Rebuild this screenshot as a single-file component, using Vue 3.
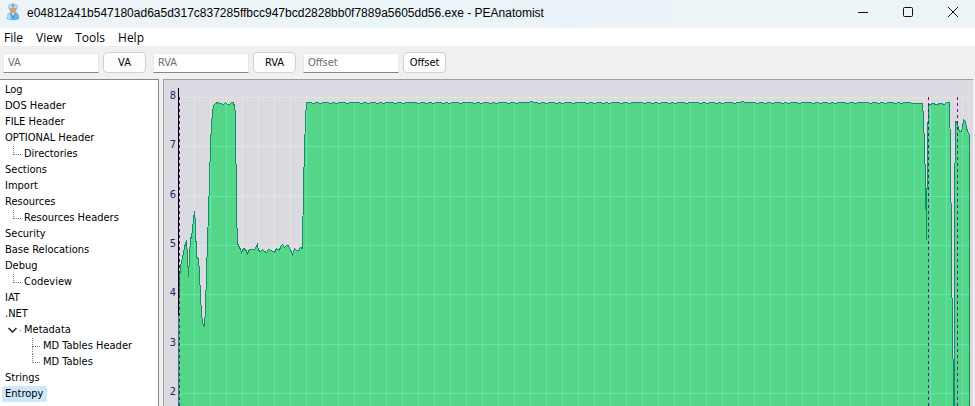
<script setup>
import { computed, ref } from 'vue'

const title = 'e04812a41b547180ad6a5d317c837285ffbcc947bcd2828bb0f7889a5605dd56.exe - PEAnatomist'
const menus = ['File', 'View', 'Tools', 'Help']
const fields = ['VA', 'RVA', 'Offset']
const selected = ref('Entropy')
const tree = [
  { name: 'Log', level: 0 },
  { name: 'DOS Header', level: 0 },
  { name: 'FILE Header', level: 0 },
  { name: 'OPTIONAL Header', level: 0 },
  { name: 'Directories', level: 1 },
  { name: 'Sections', level: 0 },
  { name: 'Import', level: 0 },
  { name: 'Resources', level: 0 },
  { name: 'Resources Headers', level: 1 },
  { name: 'Security', level: 0 },
  { name: 'Base Relocations', level: 0 },
  { name: 'Debug', level: 0 },
  { name: 'Codeview', level: 1 },
  { name: 'IAT', level: 0 },
  { name: '.NET', level: 0 },
  { name: 'Metadata', level: 1, open: true },
  { name: 'MD Tables Header', level: 2, more: true },
  { name: 'MD Tables', level: 2 },
  { name: 'Strings', level: 0 },
  { name: 'Entropy', level: 0 }
]

const columns = Array.from({ length: 49 }, (_, i) => 194 + i * 16)
const rows = [
  { value: 8, y: 97 },
  { value: 7, y: 146 },
  { value: 6, y: 196 },
  { value: 5, y: 245 },
  { value: 4, y: 294 },
  { value: 3, y: 344 },
  { value: 2, y: 393 }
]
const sections = [179, 928, 957]

const head = [
  [178, 420], [178, 315], [179, 280], [180, 265], [181, 262], [182, 257], [183, 252], [184, 247], [185, 243],
  [186, 241], [187, 256], [188, 276], [189, 256], [190, 238], [191, 236], [192, 230], [193, 218], [194, 211],
  [195, 224], [196, 257], [198, 258], [199, 272], [200, 297], [201, 312], [202, 322], [203, 325], [204, 326],
  [205, 307], [206, 273], [207, 240], [208, 213], [209, 180], [210, 144], [211, 124], [212, 112], [213, 105],
  [215, 103], [217, 102], [220, 103], [223, 104], [225, 102], [227, 104], [229, 104], [231, 102], [233, 102],
  [234, 106], [235, 113], [236, 211], [237, 243], [238, 245], [240, 249], [241, 252], [243, 248], [245, 249],
  [247, 253], [249, 249], [254, 249], [256, 246], [257, 244], [258, 250], [260, 251], [262, 249], [264, 251],
  [266, 252], [268, 249], [271, 250], [274, 252], [276, 248], [279, 250], [280, 246], [282, 244], [284, 247],
  [286, 245], [288, 245], [290, 250], [292, 254], [294, 248], [296, 250], [298, 250], [300, 247], [302, 248],
  [303, 185], [304, 149], [305, 118], [306, 102]
]
const tail = [
  [922, 103], [923, 118], [924, 146], [925, 180], [926, 239], [927, 139], [928, 105], [930, 104], [932, 103],
  [936, 104], [940, 103], [944, 104], [946, 102], [949, 102], [950, 152], [951, 251], [952, 341], [953, 376],
  [953, 420], [954, 420], [954, 206], [955, 121], [957, 122], [958, 128], [959, 131], [961, 131], [962, 126],
  [963, 119], [965, 121], [966, 127], [967, 131], [969, 134], [969, 420]
]
const dips = [5, 4, 7, 3, 8, 11, 4, 6, 3, 9, 5, 12]
const curve = computed(() => {
  const flat = []
  let x = 307
  for (let i = 0; x < 912; i++) {
    const y = i % 2 ? (i % 23 === 1 && i > 1 ? 101 : 103) : 102
    const width = i % 2 ? 3 : dips[(i / 2) % dips.length]
    flat.push([x, y], [x + width - 1, y])
    x += width
  }
  return [...head, ...flat, ...tail].map(([px, py]) => `${px + 0.5},${py + 0.5}`).join(' ')
})
</script>

<template>
  <div class="window">
    <header class="titlebar">
      <svg class="logo" viewBox="0 0 16 18" aria-hidden="true">
        <path d="M2 16 Q1 10 6 9 H10 Q15 10 14 16 Q8 18.500 2 16Z" fill="#65b6e8" />
        <path d="M2 14 Q2 11 5 10 L6 16 H3Z" fill="#a9dcf7" />
        <path d="M5 9 L8 13 L11 9Z" fill="#f4fbff" />
        <ellipse cx="8" cy="6.500" rx="3.500" ry="4" fill="#dfa06c" />
        <path d="M4 6 Q3 4 4 2 Q8 -1 12 2 Q13 4 12 6 Q8 3.500 4 6Z" fill="#b4dcf3" stroke="#78b4da" stroke-width=".6" />
        <path d="M8 1.300 V3.700 M6.800 2.500 H9.200" stroke="#db5963" stroke-width="1" />
        <path d="M6 10 L8 15 L10 10" fill="none" stroke="#3487c2" stroke-width=".8" />
      </svg>
      <h1>{{ title }}</h1>
      <div class="controls">
        <button type="button" aria-label="Minimize">
          <svg viewBox="0 0 12 12"><path d="M1 6.500H11" /></svg>
        </button>
        <button type="button" aria-label="Maximize">
          <svg viewBox="0 0 12 12"><rect x="1.500" y="1.500" width="9" height="9" rx="1" /></svg>
        </button>
        <button type="button" aria-label="Close">
          <svg viewBox="0 0 12 12"><path d="M1 1L11 11M11 1L1 11" /></svg>
        </button>
      </div>
    </header>

    <nav class="menubar">
      <button v-for="menu in menus" :key="menu" type="button">{{ menu }}</button>
    </nav>

    <form class="toolbar" @submit.prevent>
      <div v-for="field in fields" :key="field" class="field">
        <input type="text" :placeholder="field" :aria-label="field" />
        <button type="button">{{ field }}</button>
      </div>
    </form>

    <main class="content">
      <ul class="tree">
        <li v-for="node in tree" :key="node.name" :class="'level' + node.level">
          <svg v-if="node.open" class="chevron" viewBox="0 0 19 16" aria-hidden="true">
            <path d="M6.500 6L10.500 10L14.500 6" />
            <path class="dot" d="M18 8.500H19" />
          </svg>
          <span v-else-if="node.level" class="branch" :class="{ more: node.more }"></span>
          <button type="button" :class="{ selected: node.name === selected }" @click="selected = node.name">
            {{ node.name }}
          </button>
        </li>
      </ul>

      <section class="chart">
        <svg viewBox="164 80 809 326" preserveAspectRatio="xMinYMin slice" role="img" aria-label="Entropy">
          <defs>
            <clipPath id="area"><polygon :points="curve" /></clipPath>
          </defs>
          <g class="grid">
            <path v-for="x in columns" :key="x" :d="`M${x}.5 97V420`" />
            <path v-for="row in rows" :key="row.value" :d="`M179 ${row.y}.5H971`" />
          </g>
          <polygon class="fill" :points="curve" />
          <g class="grid inner" clip-path="url(#area)">
            <path v-for="x in columns" :key="x" :d="`M${x}.5 97V420`" />
            <path v-for="row in rows" :key="row.value" :d="`M179 ${row.y}.5H971`" />
          </g>
          <polyline class="line" :points="curve" />
          <path class="axis" d="M178.500 88V315" />
          <path v-for="x in sections" :key="x" class="section" :d="`M${x}.5 97V420`" />
          <text v-for="row in rows" :key="row.value" x="176" :y="row.y + 2" text-anchor="end">{{ row.value }}</text>
        </svg>
      </section>
    </main>
  </div>
</template>

<style>
body {
  margin: 0;
}
</style>

<style scoped>
.window {
  display: flex;
  flex-direction: column;
  height: 100vh;
  min-height: 320px;
  overflow: hidden;
  background: #f0f0f0;
  color: #000;
  font: 12px/16px "Open Sans", "Noto Sans", sans-serif;
}
button {
  margin: 0;
  padding: 0;
  border: 0;
  background: none;
  color: inherit;
  font: inherit;
}
.titlebar {
  display: flex;
  flex: none;
  align-items: center;
  height: 28px;
  padding: 0 0 0 5px;
  background: linear-gradient(90deg, #ecf4f7, #ebf4f8 50%, #ebf3fa 58%, #ecf4f7 75%);
}
.logo {
  width: 16px;
  height: 18px;
  margin-right: 6px;
  margin-bottom: 4px;
}
h1 {
  flex: 1;
  margin: 0 0 3px;
  overflow: hidden;
  font: 400 12px/16px "Liberation Sans", Arial, sans-serif;
  white-space: nowrap;
}
.controls {
  display: flex;
  height: 24px;
  align-self: flex-start;
}
.controls button {
  display: grid;
  place-items: center;
  width: 45px;
}
.controls svg {
  width: 12px;
  height: 12px;
  fill: none;
  stroke: #111;
}
.menubar {
  display: flex;
  flex: none;
  gap: 13px;
  height: 18px;
  padding-left: 4px;
  background: #fff;
}
.menubar button {
  height: 20px;
}
.toolbar {
  display: flex;
  flex: none;
  gap: 7px;
  height: 33px;
  padding-left: 3px;
}
.field {
  display: flex;
  align-items: center;
  gap: 4px;
}
.field input,
.field button {
  box-sizing: border-box;
  font: 11px/14px "DejaVu Sans Condensed", "Noto Sans", sans-serif;
}
.field input {
  width: 96px;
  height: 20px;
  padding: 0 4px;
  border: 1px solid #e8e8e8;
  border-bottom-color: #868686;
  background: #fff;
}
.field input::placeholder {
  color: #6d6d6d;
  opacity: 1;
}
.field button {
  width: 43px;
  height: 21px;
  border: 1px solid #d0d0d0;
  border-radius: 4px;
  background: #fdfdfd;
}
.content {
  display: flex;
  flex: 1;
  gap: 4px;
  min-height: 0;
  padding-right: 2px;
}
.tree {
  box-sizing: border-box;
  flex: none;
  width: 159px;
  margin: 0;
  padding: 2px 0 0 2px;
  overflow: hidden;
  border-top: 1px solid #828790;
  border-right: 1px solid #828790;
  background: #fff;
  font: 11px/16px "DejaVu Sans Condensed", "Noto Sans", sans-serif;
  list-style: none;
}
.tree li {
  display: flex;
  height: 16px;
}
.tree button {
  padding: 0 4px 0 3px;
  border-radius: 2px;
  white-space: nowrap;
}
.tree .selected {
  background: #cce8ff;
}
.level2 {
  padding-left: 19px;
}
.branch {
  box-sizing: border-box;
  width: 8px;
  height: 9px;
  margin: 0 0 0 11px;
  border-bottom: 1px dotted #808080;
  border-left: 1px dotted #808080;
}
.branch.more {
  position: relative;
}
.branch.more::after {
  position: absolute;
  top: 8px;
  left: -1px;
  height: 8px;
  border-left: 1px dotted #808080;
  content: "";
}
.chevron {
  width: 19px;
  height: 16px;
  fill: none;
  stroke: #333;
  stroke-width: 1.6;
}
.dot {
  stroke-width: 1;
  stroke: #808080;
}
.chart {
  flex: 1;
  min-width: 0;
  overflow: hidden;
  border-top: 1px solid #a0a0a0;
  border-left: 1px solid #a0a0a0;
  background: #dadae3;
}
.chart svg {
  display: block;
  width: 100%;
  height: 100%;
}
.grid path,
.axis,
.line,
.section {
  fill: none;
  stroke: #e8e6d2;
  shape-rendering: crispEdges;
}
.inner path {
  stroke: #5fe8b4;
}
.fill {
  fill: #55d688;
  shape-rendering: crispEdges;
}
.chart .axis {
  stroke: #000;
}
.chart .line {
  stroke: #178a68;
}
.chart .section {
  stroke: #6a1285;
  stroke-dasharray: 3 3;
}
.chart text {
  fill: #28245a;
  font: 11px "DejaVu Sans Condensed", "Noto Sans", sans-serif;
}
</style>
